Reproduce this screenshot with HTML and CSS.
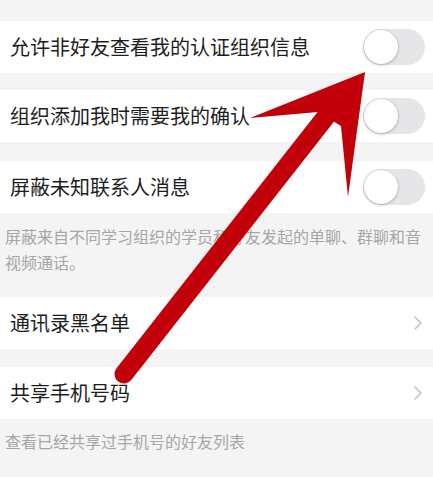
FILE: index.html
```html
<!DOCTYPE html>
<html lang="zh-CN">
<head>
<meta charset="utf-8">
<title>隐私设置</title>
<link rel="stylesheet" href="styles.css">
</head>
<body>
<div class="page">
  <div class="gap gap-top"></div>
  <div class="row">
    <span class="label">允许非好友查看我的认证组织信息</span>
    <span class="toggle"><span class="knob"></span></span>
  </div>
  <div class="gap"></div>
  <div class="row">
    <span class="label">组织添加我时需要我的确认</span>
    <span class="toggle"><span class="knob"></span></span>
  </div>
  <div class="gap gap-b"></div>
  <div class="row">
    <span class="label">屏蔽未知联系人消息</span>
    <span class="toggle"><span class="knob"></span></span>
  </div>
  <p class="desc desc-1">屏蔽来自不同学习组织的学员和好友发起的单聊、群聊和音视频通话。</p>
  <div class="row">
    <span class="label">通讯录黑名单</span>
    <svg class="chevron" viewBox="0 0 10 16" width="10" height="16"><path d="M2 2 L8 8 L2 14" fill="none" stroke="#c4c4c4" stroke-width="1.6" stroke-linecap="round" stroke-linejoin="round"/></svg>
  </div>
  <div class="gap gap-c"></div>
  <div class="row">
    <span class="label">共享手机号码</span>
    <svg class="chevron" viewBox="0 0 10 16" width="10" height="16"><path d="M2 2 L8 8 L2 14" fill="none" stroke="#c4c4c4" stroke-width="1.6" stroke-linecap="round" stroke-linejoin="round"/></svg>
  </div>
  <p class="desc desc-2">查看已经共享过手机号的好友列表</p>

  <svg class="arrow" viewBox="0 0 433 477" width="433" height="477">
    <line x1="124" y1="374" x2="328" y2="114" stroke="#c2000a" stroke-width="19" stroke-linecap="round"/>
    <polygon points="365,72 250,118 318,112 341,126 348,197" fill="#c2000a"/>
  </svg>
</div>
</body>
</html>
```
FILE: styles.css
```css
html, body {
  margin: 0;
  padding: 0;
  background: #f4f4f5;
}
body {
  font-family: "Noto Sans CJK SC", "Noto Sans", sans-serif;
}
.page {
  position: relative;
  width: 433px;
  height: 477px;
  overflow: hidden;
  background: #f4f4f5;
}
.gap {
  height: 17px;
}
.gap-top {
  height: 21px;
}
.gap-b {
  height: 19px;
}
.gap-c {
  height: 18px;
}
.row {
  height: 52px;
  background: #ffffff;
  display: flex;
  align-items: center;
  justify-content: space-between;
  padding: 0 8px 0 10px;
  box-sizing: border-box;
}
.label {
  font-size: 20px;
  color: #1e1e1e;
  line-height: 1;
  letter-spacing: 0;
}
.toggle {
  width: 62px;
  height: 36px;
  border-radius: 18px;
  background: #e6e6e8;
  display: flex;
  align-items: center;
  padding: 0 1px;
  box-sizing: border-box;
}
.knob {
  width: 34px;
  height: 34px;
  border-radius: 50%;
  background: #ffffff;
  box-shadow: 0 1px 3px rgba(0, 0, 0, 0.25), 0 0 0 0.5px rgba(0, 0, 0, 0.08);
}
.chevron {
  margin-right: 2px;
}
.desc {
  margin: 0;
  font-size: 16px;
  line-height: 26px;
  color: #a6a6a6;
  padding: 10px 6px 22px 5px;
}
.desc-2 {
  padding-top: 9px;
  padding-bottom: 0;
}
.arrow {
  position: absolute;
  left: 0;
  top: 0;
  pointer-events: none;
}
```
